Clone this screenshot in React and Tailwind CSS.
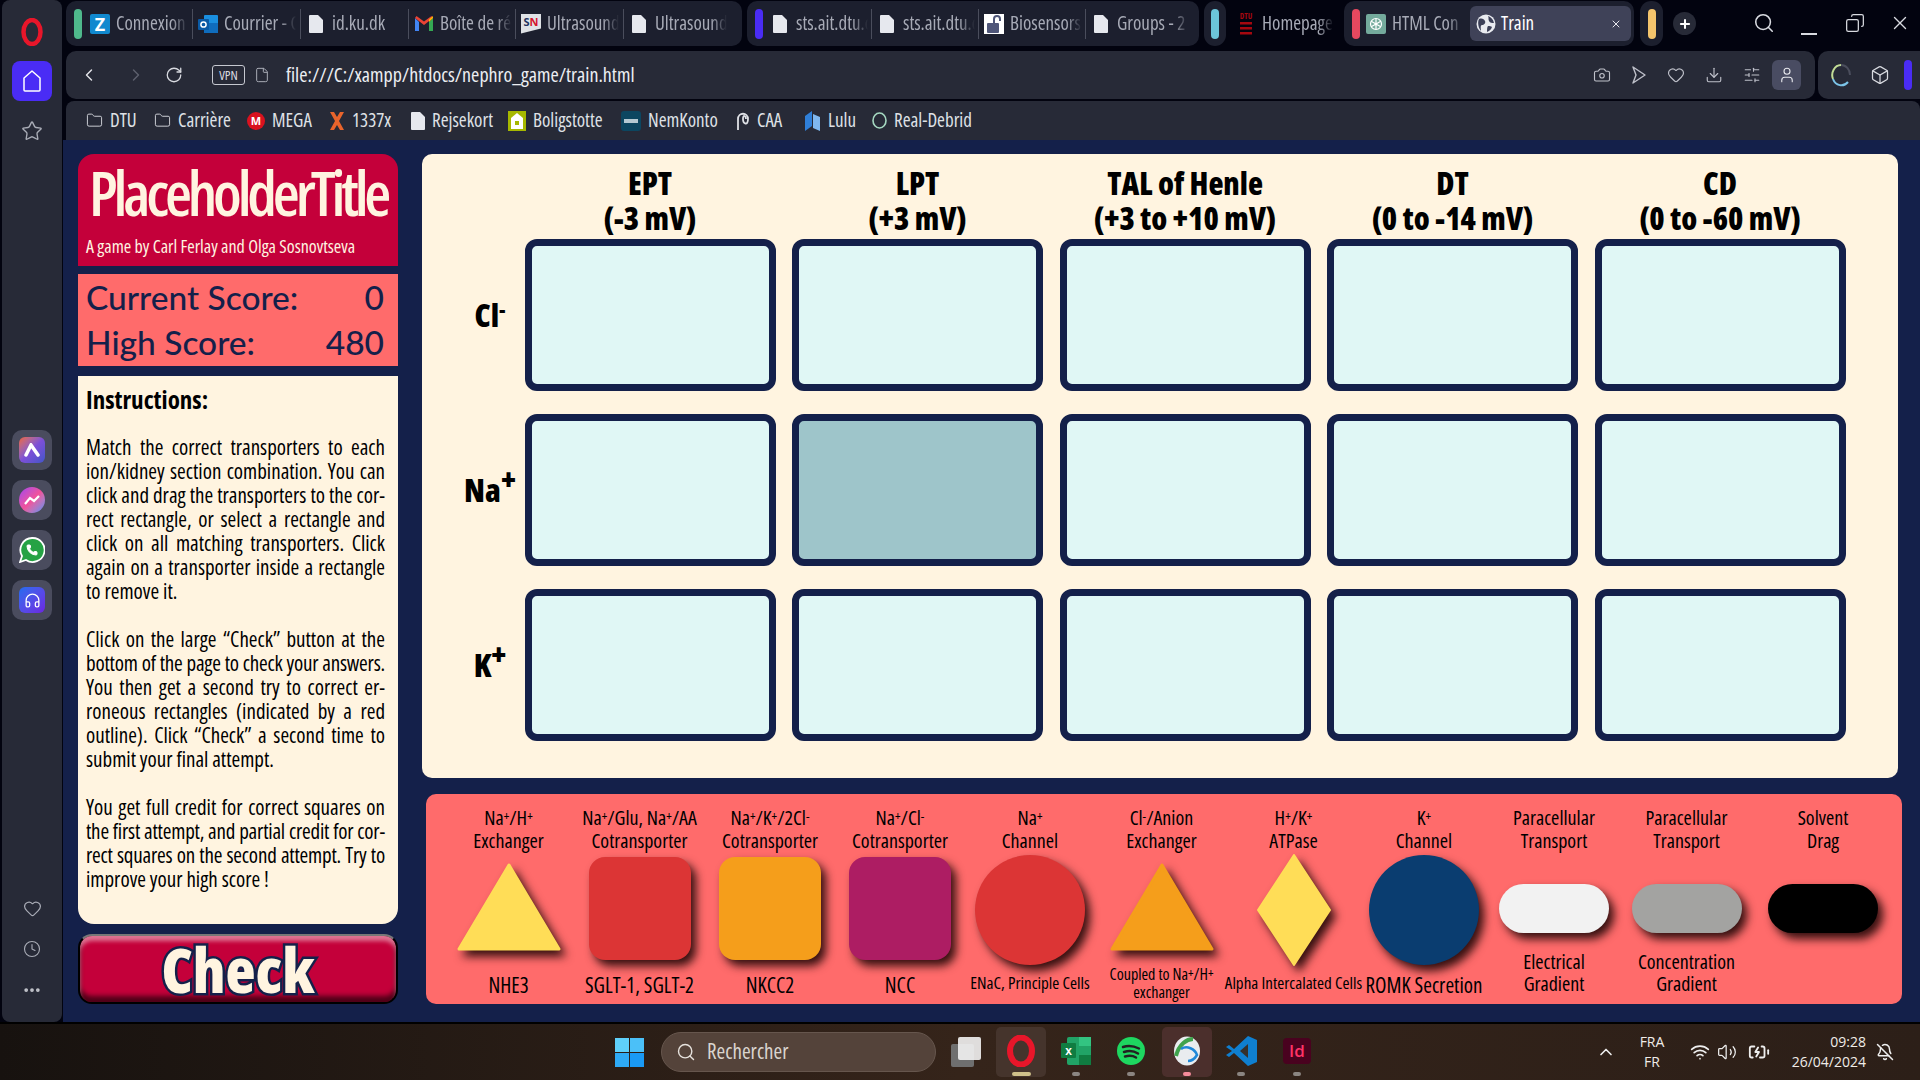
import React from 'react';
import { Search, X, Plus, ChevronLeft, ChevronRight, RotateCw, File, Camera, Heart, Download, SlidersHorizontal, User, Box, Folder, Star, Clock, ChevronUp, Wifi, Volume2, BatteryCharging, BellOff, MoreHorizontal, Copy, Headphones, Phone } from 'lucide-react';

const narrow = "font-['Open_Sans',sans-serif] [font-stretch:75%]";

function Doc({ c = "#e6e8ee" }) {
  return <svg width="14" height="18" viewBox="0 0 14 18"><path d="M0 1a1 1 0 0 1 1-1h8l5 5v12a1 1 0 0 1-1 1H1a1 1 0 0 1-1-1z" fill={c} /></svg>;
}
function ZIcon() { return <div className="w-5 h-5 rounded-[2px] bg-[#1189cf] text-white font-bold text-[18px] leading-5 text-center">Z</div>; }
function Outlook() {
  return <svg width="20" height="20" viewBox="0 0 20 20"><rect x="6" y="1" width="14" height="16" rx="1" fill="#1a8fe0" /><rect x="6" y="9" width="14" height="10" fill="#0f6cbd" /><rect x="0" y="5" width="11" height="11" rx="1" fill="#0a5aa5" /><circle cx="5.5" cy="10.5" r="2.6" fill="none" stroke="#fff" strokeWidth="1.5" /></svg>;
}
function Gmail() {
  return <svg width="18" height="15" viewBox="0 0 18 15"><path d="M0 2v13h4V6z" fill="#4285f4" /><path d="M18 2v13h-4V6z" fill="#34a853" /><path d="M0 2l9 7 9-7-1.500-2L9 5.500 1.500 0z" fill="#ea4335" /><path d="M14 6v-2.500L18 0v2z" fill="#fbbc04" /></svg>;
}
function SN() { return <div className="w-5 h-5 bg-[#dfe2e6] text-[11px] font-bold leading-4 text-center [clip-path:polygon(0_0,100%_0,100%_75%,0_100%)]"><span className="text-[#21325e]">S</span><span className="text-[#d5142c]">N</span></div>; }
function Lock() {
  return <div className="w-5 h-5 bg-white flex items-center justify-center"><svg width="16" height="18" viewBox="0 0 16 18"><rect x="1" y="8" width="12" height="10" rx="1" fill="#4f5679" /><path d="M8 8V4a3 3 0 0 1 6 0v2" stroke="#4f5679" strokeWidth="2" fill="none" /></svg></div>;
}
function Dtu() {
  return <svg width="14" height="28" viewBox="0 0 14 28"><text x="7" y="9" textAnchor="middle" fontSize="8" fontWeight="700" fill="#a5080f" fontFamily="Open Sans" style={{ fontStretch: "75%" }}>DTU</text><g fill="#a5080f"><rect x="1" y="12" width="12" height="2.500" /><rect x="1" y="17" width="12" height="2.500" /><rect x="1" y="22" width="12" height="2.500" /></g></svg>;
}
function Gpt() {
  return <div className="w-5 h-5 rounded-[2px] bg-[#74aa9c] flex items-center justify-center"><svg width="16" height="16" viewBox="0 0 16 16" fill="none" stroke="#fff" strokeWidth="1.200"><circle cx="8" cy="8" r="5.500" /><path d="M8 2.500v11M3.200 5.200l9.600 5.600M12.800 5.200l-9.600 5.600" /></svg></div>;
}
function Globe({ s = 20 }) {
  return <svg width={s} height={s} viewBox="0 0 20 20"><circle cx="10" cy="10" r="9.500" fill="#e9ebf0" /><path d="M3 5c3-1 5 0 6 2s-1 4-3 4-1 4-1 6C3 15 1 9 3 5zM12 2c3 1 5 3 6 7-2 0-4 0-5-2s0-3-1-5zM12 12c2 0 3 0 4 1-1 3-3 4-5 5 0-2 0-5 1-6z" fill="#3c4058" /></svg>;
}
function Pill({ c, h = "h-[30px]" }) { return <div className={`w-2 ${h} rounded-full shrink-0`} style={{ background: c }} />; }

function Tab({ icon, label, w = "w-[108px]", sep = true }) {
  return (
    <div className={`${w} h-[30px] flex items-center gap-[6px] pl-[5px] shrink-0 ${sep ? "border-r border-[#4a4d5c]" : ""}`}>
      <div className="w-5 flex justify-center shrink-0">{icon}</div>
      <div className={`${narrow} text-[19px] text-[#a7aab6] whitespace-nowrap overflow-hidden w-[72px] [mask-image:linear-gradient(to_right,black_78%,transparent)]`}>{label}</div>
    </div>
  );
}

function TabBar() {
  return (
    <div className="h-[51px] flex items-start pt-px relative pr-0">
      <div className="w-[676px] h-[45px] bg-[#1c1f2e] rounded-[10px] flex items-center pl-[8px] gap-[4px] shrink-0">
        <Pill c="#4fb98c" />
        <div className="flex items-center -ml-[1px]">
          <Tab icon={<ZIcon />} label="Connexion" />
          <Tab icon={<Outlook />} label="Courrier - C" />
          <Tab icon={<Doc />} label="id.ku.dk" />
          <Tab icon={<Gmail />} label="Boîte de ré" w="w-[107px]" />
          <Tab icon={<SN />} label="Ultrasound" />
          <Tab icon={<Doc />} label="Ultrasound" sep={false} />
        </div>
      </div>
      <div className="ml-[5px] w-[452px] h-[45px] bg-[#1c1f2e] rounded-[10px] flex items-center pl-[8px] shrink-0">
        <Pill c="#4a2cf5" />
        <div className="ml-[2px] flex items-center">
          <Tab icon={<Doc />} label="sts.ait.dtu.d" w="w-[107px]" />
          <Tab icon={<Doc />} label="sts.ait.dtu.d" w="w-[107px]" />
          <Tab icon={<Lock />} label="Biosensors" w="w-[107px]" />
          <Tab icon={<Doc />} label="Groups - 2" sep={false} w="w-[107px]" />
        </div>
      </div>
      <div className="ml-[5px] w-[22px] h-[45px] bg-[#1c1f2e] rounded-[11px] flex items-center justify-center shrink-0"><Pill c="#6cc5d9" /></div>
      <div className="w-[118px] h-[45px] flex items-center pl-[5px] shrink-0"><Tab icon={<Dtu />} label="Homepage" sep={false} /></div>
      <div className="w-[290px] h-[45px] bg-[#1c1f2e] rounded-[10px] flex items-center pl-[8px] shrink-0">
        <Pill c="#e5485f" />
        <div className="ml-px"><Tab icon={<Gpt />} label="HTML Con" sep={false} w="w-[109px]" /></div>
        <div className="w-[161px] h-[35px] rounded-[6px] bg-[#3f4258] flex items-center pl-[6px] pr-[9px] gap-[5px]">
          <Globe />
          <span className={`${narrow} text-[19px] text-white flex-1`}>Train</span>
          <X size={12} color="#e8e8ee" strokeWidth={2} />
        </div>
      </div>
      <div className="ml-[6px] w-[23px] h-[45px] bg-[#1c1f2e] rounded-[11px] flex items-center justify-center shrink-0"><Pill c="#f4c46c" /></div>
      <div className="ml-[10px] mt-[11px] w-[23px] h-[23px] rounded-full bg-[#272a37] flex items-center justify-center shrink-0"><Plus size={14} color="#fff" strokeWidth={3.500} /></div>
      <div className="absolute right-[9px] top-[8px] flex items-center">
        <Search size={22} color="#d8dae0" strokeWidth={1.700} />
        <div className="ml-[26px] w-[16px] h-[30px] flex items-end"><div className="w-[16px] h-[2px] bg-[#d8dae0] mb-[3px]" /></div>
        <div className="ml-[28px]"><Copy size={20} color="#d8dae0" strokeWidth={1.500} className="-scale-x-100" /></div>
        <div className="ml-[24px]"><X size={22} color="#d8dae0" strokeWidth={1.500} /></div>
      </div>
    </div>
  );
}

function AddressBar() {
  const ic = { size: 18, color: "#bfc1ca", strokeWidth: 1.500 };
  return (
    <div className="h-[50px] flex shrink-0">
      <div className="w-[1749px] h-[48px] bg-[#272a37] rounded-[10px] flex items-center pl-[13px] pr-[14px] shrink-0">
        <ChevronLeft size={20} color="#e2e3e8" strokeWidth={1.700} />
        <ChevronRight size={20} color="#5d606d" strokeWidth={1.700} className="ml-[27px]" />
        <RotateCw size={18} color="#d8dae0" strokeWidth={1.700} className="ml-[19px]" />
        <div className={`${narrow} ml-[29px] w-[33px] h-[20px] border border-[#c6c8d0] rounded-[3px] text-[13px] leading-[18px] text-center text-[#d9dbe1]`}>VPN</div>
        <File size={16} color="#a9acb6" strokeWidth={1.500} className="ml-[9px]" />
        <div className={`${narrow} ml-[16px] text-[20px] text-[#eceef2] flex-1`}>file:///C:/xampp/htdocs/nephro_game/train.html</div>
        <Camera {...ic} />
        <svg width="16" height="18" viewBox="0 0 16 18" fill="none" stroke="#bfc1ca" strokeWidth="1.400" className="ml-[20px]"><path d="M2 1l12 8-12 8 3-8z" strokeLinejoin="round" /></svg>
        <Heart {...ic} className="ml-[20px]" />
        <Download {...ic} className="ml-[20px]" />
        <SlidersHorizontal {...ic} className="ml-[20px]" />
        <div className="ml-[11px] w-[29px] h-[30px] rounded-[6px] bg-[#494c62] flex items-center justify-center"><User size={18} color="#e6e7ec" strokeWidth={1.500} /></div>
      </div>
      <div className="ml-[3px] flex-1 h-[48px] bg-[#272a37] rounded-l-[10px] flex items-center pl-[13px]">
        <svg width="20" height="24" viewBox="0 0 20 24" fill="none" strokeWidth="2"><path d="M10 2a9 10 0 0 1 9 10" stroke="#4a4d5c" /><path d="M10 2a9 10 0 0 0-8 14" stroke="#c2dd96" /><path d="M2 16a9 10 0 0 0 15 3" stroke="#7cc4e8" /></svg>
        <Box size={20} color="#d8dae0" strokeWidth={1.500} className="ml-[19px]" />
        <div className="ml-[14px]"><Pill c="#4a2cf5" /></div>
      </div>
    </div>
  );
}

function BM({ w, icon, label }) {
  return (
    <div className={`${w} flex items-center gap-[7px] shrink-0`}>
      <div className="flex justify-center shrink-0">{icon}</div>
      <span className={`${narrow} text-[19px] text-[#dfe1e6] whitespace-nowrap`}>{label}</span>
    </div>
  );
}

function Bookmarks() {
  const folder = <Folder size={17} color="#d8dae0" strokeWidth={1.300} />;
  return (
    <div className="h-[39px] bg-[#272a37] rounded-t-[8px] flex items-center pl-[20px] shrink-0">
      <BM w="w-[68px]" icon={folder} label="DTU" />
      <BM w="w-[93px]" icon={folder} label="Carrière" />
      <BM w="w-[82px]" icon={<div className="w-[18px] h-[18px] rounded-full bg-[#d9121f] text-white text-[11px] font-bold leading-[18px] text-center">M</div>} label="MEGA" />
      <BM w="w-[82px]" icon={<svg width="16" height="18" viewBox="0 0 16 18"><path d="M1 0h4l3 5 3-5h4l-5 9 5 9h-4l-3-5-3 5H1l5-9z" fill="#e8642c" /></svg>} label="1337x" />
      <BM w="w-[97px]" icon={<Doc />} label="Rejsekort" />
      <BM w="w-[113px]" icon={<div className="w-[18px] h-[20px] bg-[#a6b800] flex items-center justify-center"><svg width="12" height="16" viewBox="0 0 12 16"><path d="M6 0l6 5v11H0V5z" fill="#fff" /><rect x="4" y="8" width="4" height="4" fill="#a6b800" /></svg></div>} label="Boligstotte" />
      <BM w="w-[113px]" icon={<div className="w-5 h-5 rounded-[3px] bg-[#0c4660] flex items-center justify-center"><div className="w-[14px] h-[4px] bg-[#b5c9d2]" /></div>} label="NemKonto" />
      <BM w="w-[70px]" icon={<svg width="16" height="20" viewBox="0 0 16 20" fill="none" stroke="#dfe1e6" strokeWidth="1.800"><path d="M4 19V8c0-7 10-7 10 0s-5 5-5 0 3-3 3 0" /></svg>} label="CAA" />
      <BM w="w-[68px]" icon={<svg width="17" height="20" viewBox="0 0 17 20"><path d="M1 5l7-5v15l-7 5z" fill="#2f7fd8" /><path d="M9 3l7 3v14l-7-3z" fill="#7fb8f0" /></svg>} label="Lulu" />
      <BM w="w-[110px]" icon={<svg width="15" height="17" viewBox="0 0 15 17" fill="none" strokeWidth="1.600"><ellipse cx="7.500" cy="8.500" rx="6.500" ry="7.500" stroke="#a4d7c0" /></svg>} label="Real-Debrid" />
    </div>
  );
}

function SideApp({ children }) {
  return <div className="w-10 h-10 rounded-[10px] bg-[#4a4c5e] flex items-center justify-center">{children}</div>;
}

function Sidebar() {
  return (
    <div className="w-[63px] shrink-0 bg-[#02030f] pl-[2px] pr-px h-[1022px]">
      <div className="h-full bg-[#272a37] rounded-[8px] flex flex-col items-center">
        <svg width="22" height="28" viewBox="0 0 22 28" className="mt-[18px]" fill="none"><ellipse cx="11" cy="14" rx="8.500" ry="12" stroke="#e8162a" strokeWidth="4.500" /></svg>
        <div className="mt-[15px] w-10 h-10 rounded-[8px] bg-[#4a2cf5] flex items-center justify-center">
          <svg width="20" height="24" viewBox="0 0 20 24" fill="none" stroke="#fff" strokeWidth="1.500"><path d="M2 9l8-7 8 7v12a1 1 0 0 1-1 1H3a1 1 0 0 1-1-1z" strokeLinejoin="round" /></svg>
        </div>
        <Star size={22} color="#a9acb6" strokeWidth={1.500} className="mt-[19px]" />
        <div className="mt-[288px] flex flex-col gap-[10px]">
          <SideApp><div className="w-[26px] h-[26px] rounded-[6px] bg-gradient-to-br from-[#f0622a] via-[#7d4fd8] to-[#3f55c8] flex items-center justify-center"><svg width="16" height="14" viewBox="0 0 16 14" fill="none" stroke="#fff" strokeWidth="3.500" strokeLinecap="round"><path d="M2 12L7 2l7 10" /></svg></div></SideApp>
          <SideApp><div className="w-[26px] h-[26px] rounded-full bg-gradient-to-br from-[#a33cf0] via-[#f0509c] to-[#2f8cf5] flex items-center justify-center"><svg width="16" height="10" viewBox="0 0 16 10" fill="none" stroke="#fff" strokeWidth="2.200"><path d="M1 9l5-6 4 3 5-5" /></svg></div></SideApp>
          <SideApp><svg width="26" height="26" viewBox="0 0 26 26"><path d="M13 1a12 12 0 0 0-10 18L1 25l6-2A12 12 0 1 0 13 1z" fill="#25a244" stroke="#fff" strokeWidth="1.800" /><Phone x="7" y="7" width="12" height="12" color="#fff" fill="#fff" /></svg></SideApp>
          <SideApp><div className="w-[26px] h-[26px] rounded-[6px] bg-gradient-to-br from-[#1a6cf0] to-[#6a22e0] flex items-center justify-center"><Headphones size={17} color="#fff" strokeWidth={1.800} /></div></SideApp>
        </div>
        <div className="mt-auto mb-[22px] flex flex-col items-center gap-[22px]">
          <Heart size={19} color="#a9acb6" strokeWidth={1.500} />
          <Clock size={18} color="#a9acb6" strokeWidth={1.500} />
          <MoreHorizontal size={20} color="#c3c5cc" strokeWidth={2.500} />
        </div>
      </div>
    </div>
  );
}

function L({ children, last, tight }) {
  return <div className={`h-6 leading-6 whitespace-nowrap ${tight ? "tracking-[-0.2px]" : ""} ${last ? "text-left" : "text-justify [text-align-last:justify]"}`}>{children}</div>;
}

function LeftCol() {
  const p1 = ["Match the correct transporters to each", "ion/kidney section combination. You can", "click and drag the transporters to the cor-", "rect rectangle, or select a rectangle and", "click on all matching transporters. Click", "again on a transporter inside a rectangle", "to remove it."];
  const p2 = ["Click on the large “Check” button at the", "bottom of the page to check your answers.", "You then get a second try to correct er-", "roneous rectangles (indicated by a red", "outline). Click “Check” a second time to", "submit your final attempt."];
  const p3 = ["You get full credit for correct squares on", "the first attempt, and partial credit for cor-", "rect squares on the second attempt. Try to", "improve your high score !"];
  const tight = ["bottom of the page to check your answers.", "the first attempt, and partial credit for cor-", "rect squares on the second attempt. Try to"];
  const P = ({ a }) => <div className="mb-6">{a.map((t, i) => <L key={i} last={i === a.length - 1} tight={tight.includes(t)}>{t}</L>)}</div>;
  return (
    <div className="w-[320px] shrink-0 flex flex-col">
      <div className="h-[112px] bg-[#c4003a] rounded-t-[16px] text-[#fff4e0] pl-[8px] shrink-0">
        <div className={`${narrow} text-[62px] leading-[76px] font-semibold tracking-[-4.2px] [word-spacing:-8px] whitespace-nowrap pl-[3px]`}>Placeholder Title</div>
        <div className={`${narrow} text-[18px] leading-[20px] mt-[6px] whitespace-nowrap`}>A game by Carl Ferlay and Olga Sosnovtseva</div>
      </div>
      <div className="mt-2 h-[92px] bg-[#ff6b6b] text-[#14204a] font-['Lato',sans-serif] font-medium text-[33.5px] leading-[45px] px-2 pr-[14px] pt-px shrink-0">
        <div className="flex justify-between"><span>Current Score:</span><span>0</span></div>
        <div className="flex justify-between"><span>High Score:</span><span>480</span></div>
      </div>
      <div className={`${narrow} mt-[10px] h-[548px] bg-[#fff4e0] rounded-b-[16px] px-2 pr-[13px] pt-[11px] text-[21px] text-black shrink-0`}>
        <div className="h-6 leading-6 text-[25px] font-bold mb-6">Instructions:</div>
        <P a={p1} /><P a={p2} /><P a={p3} />
      </div>
      <div className="mt-[10px] h-[70px] rounded-[14px] border-[2px] border-black border-t-[#777777] bg-[#c4003a] shadow-[inset_0_5px_4px_rgba(255,255,255,0.45),inset_0_-6px_5px_rgba(0,0,0,0.6)] flex items-center justify-center shrink-0">
        <span className={`${narrow} font-extrabold text-[62px] leading-[62px] text-[#fff4e0] [-webkit-text-stroke:5px_#14204a] [paint-order:stroke_fill]`}>Check</span>
      </div>
    </div>
  );
}

const heavy = `${narrow} font-extrabold text-black`;

function Cell({ on }) {
  return <div className={`h-[152px] rounded-[12px] border-[7px] border-[#14204a] ${on ? "bg-[#9ec5ca]" : "bg-[#e0f7f5]"}`} />;
}

function Grid() {
  const cols = [["EPT", "(-3 mV)"], ["LPT", "(+3 mV)"], ["TAL of Henle", "(+3 to +10 mV)"], ["DT", "(0 to -14 mV)"], ["CD", "(0 to -60 mV)"]];
  const rows = [
    <>Cl<sup className="text-[20px]">-</sup></>,
    <>Na<sup className="text-[30px] -top-[12px]">+</sup></>,
    <>K<sup className="text-[30px] -top-[12px]">+</sup></>,
  ];
  return (
    <div className="w-[1476px] h-[624px] bg-[#fff4e0] rounded-[10px] pl-[10px] pt-[13px] shrink-0">
      <div className="grid grid-cols-[76px_251px_251px_251px_251px_251px] gap-x-[16.5px] gap-y-[23px]">
        <div className="-mb-[23px] h-[72px]" />
        {cols.map((c, i) => (
          <div key={i} className={`${heavy} -mb-[23px] -mt-px h-[72px] text-center text-[31px] leading-[35px] whitespace-nowrap`}>
            <div>{c[0]}</div><div>{c[1]}</div>
          </div>
        ))}
        {rows.map((r, ri) => (
          <React.Fragment key={ri}>
            <div className={`${heavy} text-[32px] flex items-center justify-center pl-[40px]`}><div>{r}</div></div>
            {[0, 1, 2, 3, 4].map((c) => <Cell key={c} on={ri === 1 && c === 1} />)}
          </React.Fragment>
        ))}
      </div>
    </div>
  );
}

const sh = "[filter:drop-shadow(5px_6px_5px_rgba(30,5,5,0.9))]";
function Tri({ c }) { return <svg width="104" height="90" viewBox="0 0 104 90" className={`${sh} mb-[4px] overflow-visible`}><path d="M52 2L102 86H2z" fill={c} stroke={c} strokeWidth="3" strokeLinejoin="round" /></svg>; }
function Sq({ c }) { return <div className={`w-[102px] h-[103px] rounded-[16px] mb-[4px] ${sh}`} style={{ background: c }} />; }
function Circ({ c }) { return <div className={`w-[110px] h-[110px] rounded-full ${sh}`} style={{ background: c }} />; }
function Dia({ c }) { return <svg width="74" height="114" viewBox="0 0 74 114" className={`${sh} overflow-visible`}><path d="M37 2L73 57 37 112 1 57z" fill={c} stroke={c} strokeWidth="2" strokeLinejoin="round" /></svg>; }
function Cap({ c }) { return <div className={`w-[110px] h-[49px] rounded-full mb-[4px] ${sh}`} style={{ background: c }} />; }

const P = () => <span className="text-[13px] align-top relative top-[-1px]">+</span>;
const M = () => <span className="text-[13px] align-top relative top-[-1px]">-</span>;

function Item({ top, shape, bottom, small, two }) {
  return (
    <div className={`${narrow} text-black flex flex-col items-center`}>
      <div className="h-[47px] text-center text-[20px] leading-[23px] whitespace-nowrap">{top[0]}<br />{top[1]}</div>
      <div className="h-[114px] flex items-center justify-center">{shape}</div>
      <div className="h-[38px] flex items-center justify-center text-center whitespace-nowrap">
        {two ? <div className="text-[20px] leading-[22px] -mt-[26px]">{bottom[0]}<br />{bottom[1]}</div>
          : small ? <div className={`${small} leading-[18px] -mt-[6px]`}>{bottom}</div>
            : <div className="text-[21px]">{bottom}</div>}
      </div>
    </div>
  );
}

function Shelf() {
  return (
    <div className="w-[1476px] h-[210px] ml-[4px] mt-[16px] bg-[#ff6b6b] rounded-[10px] pl-[17px] pt-[12px] shrink-0">
      <div className="grid grid-cols-[131px_131px_130px_130px_130px_133px_131px_130px_130px_135px_138px]">
        <Item top={[<>Na<P />/H<P /></>, "Exchanger"]} shape={<Tri c="#ffdd57" />} bottom="NHE3" />
        <Item top={[<>Na<P />/Glu, Na<P />/AA</>, "Cotransporter"]} shape={<Sq c="#dc3535" />} bottom="SGLT-1, SGLT-2" />
        <Item top={[<>Na<P />/K<P />/2Cl<M /></>, "Cotransporter"]} shape={<Sq c="#f59e1b" />} bottom="NKCC2" />
        <Item top={[<>Na<P />/Cl<M /></>, "Cotransporter"]} shape={<Sq c="#ad1d63" />} bottom="NCC" />
        <Item top={[<>Na<P /></>, "Channel"]} shape={<Circ c="#dc3535" />} bottom="ENaC, Principle Cells" small="text-[17px]" />
        <Item top={[<>Cl<M />/Anion</>, "Exchanger"]} shape={<Tri c="#f59e1b" />} bottom={<>Coupled to Na<P />/H<P /><br />exchanger</>} small="text-[16px]" />
        <Item top={[<>H<P />/K<P /></>, "ATPase"]} shape={<Dia c="#ffdd57" />} bottom="Alpha Intercalated Cells" small="text-[17px]" />
        <Item top={[<>K<P /></>, "Channel"]} shape={<Circ c="#0a3d70" />} bottom="ROMK Secretion" />
        <Item top={["Paracellular", "Transport"]} shape={<Cap c="#f2f2f2" />} bottom={["Electrical", "Gradient"]} two />
        <Item top={["Paracellular", "Transport"]} shape={<Cap c="#a3a3a1" />} bottom={["Concentration", "Gradient"]} two />
        <Item top={["Solvent", "Drag"]} shape={<Cap c="#000000" />} bottom="" />
      </div>
    </div>
  );
}

function Dot({ c = "#8b8581", w = "w-[8px]" }) { return <div className={`${w} h-[4px] rounded-full mx-auto mt-[2px]`} style={{ background: c }} />; }

function TBItem({ w, bg, icon, dot, dw }) {
  return (
    <div className={`${w} h-[50px] rounded-[5px] flex flex-col items-center justify-end pb-[1px] shrink-0 ${bg || ""}`}>
      <div className="h-[34px] flex items-center">{icon}</div>
      <div className="h-[8px] flex items-end"><Dot c={dot} w={dw} /></div>
    </div>
  );
}

function Taskbar() {
  return (
    <div className="h-[58px] w-full border-t-2 border-black bg-gradient-to-r from-[#17120f] via-[#35241a] to-[#2c1f18] flex items-center relative font-['Open_Sans',sans-serif] text-[#f0ece8]">
      <div className="ml-[615px] w-[29px] h-[29px] grid grid-cols-2 gap-[1px] shrink-0">
        <div className="bg-[#5fd0fa]" /><div className="bg-[#4bc0f8]" /><div className="bg-[#2eaaf5]" /><div className="bg-[#1a9af5]" />
      </div>
      <div className="ml-[17px] w-[275px] h-[40px] rounded-full bg-[#54433a] border border-[#66564d] flex items-center pl-[14px] shrink-0">
        <Search size={20} color="#e6e2dd" strokeWidth={1.700} />
        <span className={`${narrow} ml-[11px] text-[21px] text-[#dad5cf]`}>Rechercher</span>
      </div>
      <div className="ml-[15px] w-[30px] h-[30px] relative shrink-0">
        <div className="absolute left-0 bottom-0 w-[23px] h-[23px] bg-[#6f6f6f] rounded-[2px]" />
        <div className="absolute right-0 top-0 w-[23px] h-[23px] bg-[#f2f2f2]/90 rounded-[2px]" />
      </div>
      <div className="ml-[15px] flex items-center shrink-0">
        <TBItem w="w-[50px]" bg="bg-[#45342c]" dot="#cfc08a" dw="w-[19px]" icon={<svg width="30" height="32" viewBox="0 0 30 32" fill="none"><ellipse cx="15" cy="16" rx="11" ry="13.500" stroke="#e8162a" strokeWidth="6" /></svg>} />
        <div className="w-[5px]" />
        <TBItem w="w-[50px]" dot="#8b8581" icon={<svg width="30" height="28" viewBox="0 0 30 28"><rect x="6" y="0" width="24" height="28" rx="2" fill="#21a366" /><rect x="18" y="0" width="12" height="9" fill="#33c481" /><rect x="18" y="18" width="12" height="10" fill="#107c41" /><rect x="0" y="6" width="15" height="15" rx="1" fill="#107c41" /><text x="7.500" y="18" textAnchor="middle" fontSize="12" fontWeight="700" fill="#fff" fontFamily="Liberation Sans">x</text></svg>} />
        <div className="w-[5px]" />
        <TBItem w="w-[50px]" dot="#8b8581" icon={<svg width="28" height="28" viewBox="0 0 28 28" fill="none"><circle cx="14" cy="14" r="14" fill="#1ed760" /><g stroke="#222" strokeWidth="2.500" strokeLinecap="round"><path d="M6 10c6-2 11-1 16 1.500" /><path d="M7 15c5-1.500 10-1 14 1.500" /><path d="M8 19.500c4-1 8-.8 11 1" /></g></svg>} />
        <div className="w-[6px]" />
        <TBItem w="w-[50px]" bg="bg-[#4b2f2c]" dot="#f58b9a" icon={<svg width="28" height="30" viewBox="0 0 28 30" fill="none"><ellipse cx="14" cy="15" rx="13" ry="14.500" fill="#e9ecef" /><path d="M3 20C6 8 14 3 20 3" stroke="#3fa34d" strokeWidth="4" /><path d="M8 13c6-4 14 0 16 6-3 5-6 6-9 6" stroke="#1f88d8" strokeWidth="2.500" /></svg>} />
        <div className="w-[4px]" />
        <TBItem w="w-[50px]" dot="#8b8581" icon={<svg width="31" height="32" viewBox="0 0 31 32"><path d="M22 1l9 4v22l-9 4L8 18l-5 4-3-2 6-4-6-4 3-2 5 4z" fill="#0f7fd0" /><path d="M22 9v14l-8-7z" fill="#35302c" /></svg>} />
        <div className="w-[6px]" />
        <TBItem w="w-[50px]" dot="#8b8581" icon={<div className="w-[28px] h-[26px] rounded-[4px] bg-[#49021f] text-[#ff3366] text-[17px] font-semibold leading-[26px] text-center">Id</div>} />
      </div>
      <div className="absolute left-[1596px] top-0 h-full flex items-center">
        <ChevronUp size={20} color="#eee" strokeWidth={2} />
        <div className="ml-[16px] w-[40px] text-center text-[14px] leading-[20px] font-normal">FRA<br />FR</div>
        <Wifi size={20} className="ml-[18px]" color="#eee" strokeWidth={2} />
        <Volume2 size={20} className="ml-[7px]" color="#eee" strokeWidth={1.500} />
        <BatteryCharging size={22} className="ml-[11px]" color="#eee" strokeWidth={2} />
        <div className="ml-[17px] w-[79px] text-right text-[14px] leading-[20px] whitespace-nowrap"><div>09:28</div><div>26/04/2024</div></div>
        <BellOff size={18} className="ml-[10px]" color="#eee" strokeWidth={2} />
      </div>
    </div>
  );
}

export default function App() {
  return (
    <div className="w-[1920px] h-[1080px] overflow-hidden flex flex-col bg-[#02030f]">
      <div className="flex h-[1022px] shrink-0">
        <Sidebar />
        <div className="flex-1 flex flex-col pl-[3px] min-w-0">
          <TabBar />
          <AddressBar />
          <Bookmarks />
          <div className="flex-1 -ml-[3px] bg-[#14204a] flex pl-[15px] pt-[14px] pr-[22px] gap-[24px] min-h-0">
            <LeftCol />
            <div className="flex flex-col">
              <Grid />
              <Shelf />
            </div>
          </div>
        </div>
      </div>
      <Taskbar />
    </div>
  );
}
